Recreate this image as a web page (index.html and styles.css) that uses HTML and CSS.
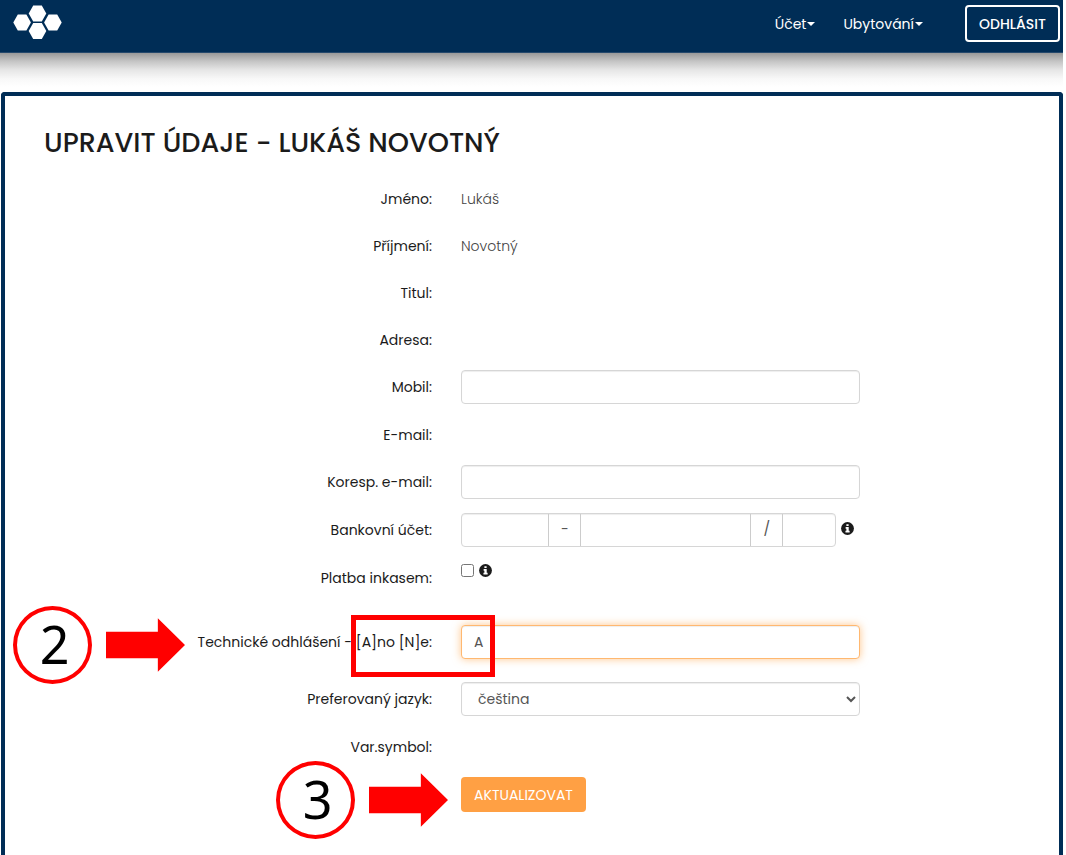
FILE: index.html
```html
<!DOCTYPE html>
<html lang="cs">
<head>
<meta charset="utf-8">
<meta name="viewport" content="width=device-width, initial-scale=1">
<title>Upravit údaje</title>
<link rel="stylesheet" href="styles.css">
</head>
<body>
<svg class="defs" aria-hidden="true">
  <symbol id="info" viewBox="0 0 14 14">
    <circle cx="7" cy="7" r="6.9" fill="#1b1b1b"/>
    <path d="M5.8 2.4h2.4v2H5.8zM5 5.5h3.3v4h1v1.8H4.8V9.5h1V7.2H5z" fill="#fff"/>
  </symbol>
  <symbol id="arrow" viewBox="0 0 80 54">
    <path d="M0 13.5h52.500V0L80 27 52.500 54V40.500H0z" fill="#f00"/>
  </symbol>
</svg>
<header class="navbar">
  <a class="brand" href="#" aria-label="Domů">
    <svg class="logo" viewBox="0 0 49 34" fill="#fff" aria-hidden="true">
      <path d="M20.200 0h8.600l4.500 8-4.500 8h-8.600l-4.500-8z"/>
      <path d="M20.200 17.500h8.600l4.500 8-4.500 8h-8.600l-4.500-8z"/>
      <path d="M4.800 9h8.600l4.500 8-4.500 8H4.800L.3 17z"/>
      <path d="M35.600 9h8.600l4.500 8-4.500 8h-8.600l-4.500-8z"/>
    </svg>
  </a>
  <nav class="menu">
    <a class="menu-link" href="#">Účet</a>
    <a class="menu-link" href="#">Ubytování</a>
    <button class="logout" type="button">ODHLÁSIT</button>
  </nav>
</header>
<main class="panel">
  <h1 class="title">UPRAVIT ÚDAJE - LUKÁŠ NOVOTNÝ</h1>
  <form class="form">
    <div class="row"><span class="label">Jméno:</span><span class="value">Lukáš</span></div>
    <div class="row"><span class="label">Příjmení:</span><span class="value">Novotný</span></div>
    <div class="row"><span class="label">Titul:</span></div>
    <div class="row"><span class="label">Adresa:</span></div>
    <div class="row"><label class="label" for="mobil">Mobil:</label><input class="control" id="mobil" type="tel"></div>
    <div class="row"><span class="label">E-mail:</span></div>
    <div class="row"><label class="label" for="koresp">Koresp. e-mail:</label><input class="control" id="koresp" type="email"></div>
    <div class="row">
      <label class="label" for="ucet">Bankovní účet:</label>
      <div class="account">
        <div class="group">
          <input class="part prefix" type="text" aria-label="Předčíslí">
          <span class="sep">-</span>
          <input class="part number" id="ucet" type="text">
          <span class="sep">/</span>
          <input class="part bank" type="text" aria-label="Kód banky">
        </div>
        <svg class="info" aria-hidden="true"><use href="#info"/></svg>
      </div>
    </div>
    <div class="row">
      <label class="label" for="inkaso">Platba inkasem:</label>
      <div class="check"><input class="checkbox" id="inkaso" type="checkbox"><svg class="info" aria-hidden="true"><use href="#info"/></svg></div>
    </div>
    <div class="row technical">
      <label class="label" for="odhlaseni">Technické odhlášení - [A]no [N]e:</label>
      <input class="control active" id="odhlaseni" type="text" value="A">
    </div>
    <div class="row">
      <label class="label" for="jazyk">Preferovaný jazyk:</label>
      <select class="control" id="jazyk"><option>čeština</option></select>
    </div>
    <div class="row"><span class="label">Var.symbol:</span></div>
    <div class="row"><button class="submit" type="submit">AKTUALIZOVAT</button></div>
  </form>
</main>
<div class="highlight"></div>
<div class="step step-two"><span class="number-badge">2</span><svg class="arrow" aria-hidden="true"><use href="#arrow"/></svg></div>
<div class="step step-three"><span class="number-badge">3</span><svg class="arrow" aria-hidden="true"><use href="#arrow"/></svg></div>
</body>
</html>
```
FILE: styles.css
```css
* { box-sizing: border-box; }

body {
  position: relative;
  display: flex;
  flex-direction: column;
  min-height: 100vh;
  margin: 0 3px 0 0;
  background: #fff;
  color: #1b1b1b;
  font: 400 14px/20px Poppins, Inter, "Open Sans", sans-serif;
}

input, select, button { font: inherit; margin: 0; }

.defs { position: absolute; width: 0; height: 0; }

.navbar {
  position: relative;
  display: flex;
  justify-content: space-between;
  align-items: flex-start;
  height: 53px;
  padding: 5px 3px 0 13px;
  background: #002d56;
  border-bottom: 1px solid #24486c;
}

.navbar::after {
  content: "";
  position: absolute;
  top: 100%;
  right: 0;
  left: 0;
  height: 34px;
  margin-top: 1px;
  background: linear-gradient(#999, #c4c4c4 24%, #e6e6e6 50%, #f8f8f8 76%, #fff);
}

.brand { display: block; }
.logo { display: block; width: 49px; height: 35px; }

.menu { display: flex; align-items: center; }

.menu-link {
  display: flex;
  align-items: center;
  gap: 1px;
  margin-right: 28px;
  color: #fff;
  text-decoration: none;
}

.menu-link::after {
  content: "";
  border: 4px solid transparent;
  border-top-color: #fff;
  border-bottom: 0;
}

.logout {
  width: 95px;
  height: 37px;
  margin-left: 14px;
  padding: 0;
  border: 2px solid #fff;
  border-radius: 4px;
  background: transparent;
  color: #fff;
  font-weight: 500;
}

.panel {
  flex: 1;
  margin: 39px 0 0 1px;
  padding: 29px 39px 32px;
  border: 4px solid #002d56;
  border-bottom: 0;
  border-radius: 4px 4px 0 0;
}

.title {
  margin: 0 0 21px;
  font-size: 27px;
  font-weight: 500;
  line-height: 36px;
}

.form { display: flex; flex-direction: column; gap: 14px; }

.row {
  display: grid;
  grid-template-columns: minmax(0, 388fr) minmax(0, 399fr) minmax(0, 131fr);
  column-gap: 29px;
  align-items: center;
  min-height: 33px;
}

.label { text-align: right; white-space: nowrap; }
.value { color: #444; font-weight: 300; }

.control {
  width: 100%;
  height: 34px;
  padding: 0 12px;
  border: 1px solid #d6d6d6;
  border-radius: 4px;
  outline: 0;
  background: #fff;
  color: #555;
  box-shadow: inset 0 1px 1px rgba(0, 0, 0, .07);
}

.active {
  border-color: #ffb870;
  box-shadow: inset 0 1px 1px rgba(0, 0, 0, .07), 0 0 8px rgba(255, 160, 64, .6);
}

.account { display: flex; align-items: center; gap: 5px; padding-right: 6px; }
.account .info { margin-bottom: 4px; }

.group {
  display: flex;
  flex: 1;
  min-width: 0;
  height: 34px;
  border: 1px solid #d6d6d6;
  border-radius: 4px;
  box-shadow: inset 0 1px 1px rgba(0, 0, 0, .07);
}

.part { width: 0; min-width: 0; border: 0; background: transparent; outline: 0; padding: 0; }
.prefix { flex: 87; }
.number { flex: 170; }
.bank { flex: 52; }

.sep {
  flex: none;
  width: 33px;
  border: solid #ccc;
  border-width: 0 1px;
  color: #555;
  line-height: 30px;
  text-align: center;
}

.info { display: block; flex: none; width: 13px; height: 13px; }

.check { display: flex; gap: 5px; align-self: start; padding-top: 3px; }
.checkbox { width: 13px; height: 13px; }

.technical { margin: 17px 0 9px; }

.submit {
  grid-column: 2;
  justify-self: start;
  width: 125px;
  height: 35px;
  padding: 0;
  border: 0;
  border-radius: 4px;
  background: #ffa044;
  color: #fff;
}

/* Instruction marks laid over the form */
.highlight {
  position: absolute;
  top: 615px;
  left: 351px;
  width: 144px;
  height: 62px;
  border: 5px solid #f00;
}

.step { position: absolute; display: flex; align-items: center; gap: 14px; }
.step-two { top: 606px; left: 13px; }
.step-three { top: 761px; left: 276px; }

.number-badge {
  width: 79px;
  height: 78px;
  padding-left: 4px;
  border: 4px solid #f00;
  border-radius: 50%;
  color: #000;
  font: 400 52px/68px "Noto Sans", sans-serif;
  text-align: center;
}

.arrow { width: 79px; height: 54px; }
```
